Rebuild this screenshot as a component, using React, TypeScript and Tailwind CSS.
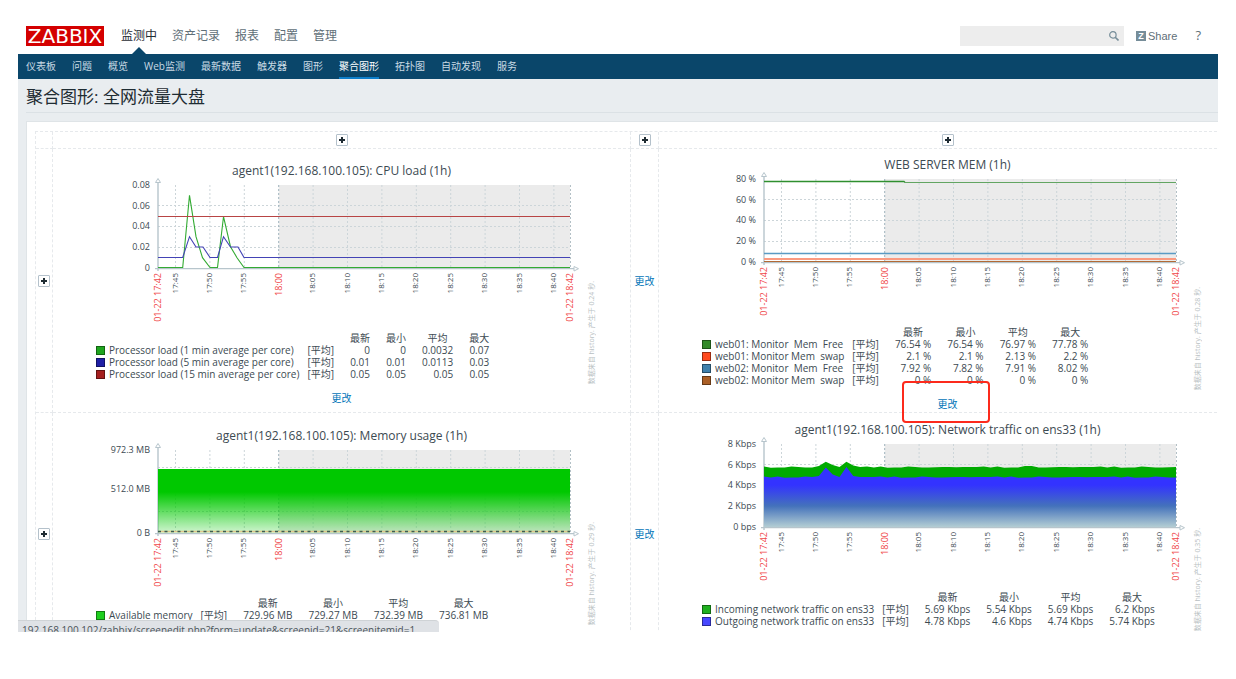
import React from "react";

const TICKS = ["17:45", "17:50", "17:55", "18:00", "18:05", "18:10", "18:15", "18:20", "18:25", "18:30", "18:35", "18:40"];

const LEFT = 106;
const RIGHT = 518;
const TOP = 7;
const BOTTOM = 90;
const HOUR_X = 226.7;

const tickX = (i: number) => LEFT + 17.5 + i * 34.4;

type Row = { color: string; name: string; values: string[] };

type ChartProps = {
  title: string;
  yLabels: { y: number; text: string }[];
  gridY: number[];
  rows: Row[];
  note: string;
  marked?: boolean;
  children: React.ReactNode;
};

function Chart({ title, yLabels, gridY, rows, note, marked, children }: ChartProps) {
  return (
    <div className="flex flex-col items-center justify-center border-r border-b border-dashed border-[#e6e9ec] pt-[5px]">
      <figure className="grid w-[577px] font-['Open_Sans','Noto_Sans_CJK_SC',sans-serif] text-[#3c4a52]">
        <div className="col-start-1 row-start-1 pb-1">
          <h2 className="pt-0.5 text-center text-[12px] leading-[15px]">{title}</h2>
          <svg viewBox="1 0 577 150" className="block h-[150px] w-full" role="img" aria-label={title}>
            <rect x={HOUR_X} y={TOP} width={RIGHT - HOUR_X} height={BOTTOM - TOP} fill="#ebebeb" />
            <g stroke="#ccd5d9" strokeWidth="1" strokeDasharray="2 2">
              {gridY.map((y) => (
                <line key={y} x1={LEFT} x2={RIGHT} y1={y} y2={y} />
              ))}
              {TICKS.map((t, i) => (
                <line key={t} x1={tickX(i)} x2={tickX(i)} y1={TOP} y2={BOTTOM} stroke={t === "18:00" ? "#9fb3bd" : "#ccd5d9"} />
              ))}
              <line x1={RIGHT + 0.5} x2={RIGHT + 0.5} y1={TOP} y2={BOTTOM} stroke="#b3c0c6" />
            </g>
            <g stroke="#b7c5cc" fill="none">
              <path d="M106 5V93" strokeWidth="1.4" />
              <path d="M103 90.700H522" strokeWidth="1.2" />
              <path d="M103.500 4.500L106 .5L108.500 4.500Z" fill="#fff" />
              <path d="M522 88.500L526.500 90.700L522 93Z" fill="#fff" />
            </g>
            {children}
            <g fontSize="9" fill="#3c4a52" textAnchor="end">
              {yLabels.map((l) => (
                <text key={l.text} x="98" y={l.y + 3}>
                  {l.text}
                </text>
              ))}
            </g>
            <g fontSize="8" fill="#3c4a52" textAnchor="end">
              {TICKS.map((t, i) =>
                t === "18:00" ? (
                  <text key={t} fontSize="9" fill="#f0474a" transform={`translate(${tickX(i) + 3} 95) rotate(-90)`}>
                    {t}
                  </text>
                ) : (
                  <text key={t} transform={`translate(${tickX(i) + 2} 95) rotate(-90)`}>
                    {t}
                  </text>
                ),
              )}
              <text fontSize="9" fill="#f0474a" transform="translate(109 95) rotate(-90)">01-22 17:42</text>
              <text fontSize="9" fill="#f0474a" transform="translate(521 95) rotate(-90)">01-22 18:42</text>
            </g>
          </svg>
          <table className="mt-1 ml-[43px] border-collapse text-[10px] leading-3 whitespace-nowrap">
            <thead>
              <tr className="h-3">
                <th colSpan={2} className="p-0" />
                {["最新", "最小", "平均", "最大"].map((h) => (
                  <th key={h} scope="col" className="h-3 p-0 pl-4 text-center font-normal">
                    {h}
                  </th>
                ))}
              </tr>
            </thead>
            <tbody>
              {rows.map((r) => (
                <tr key={r.name + r.color} className="h-3">
                  <th scope="row" className="p-0 text-left font-normal whitespace-pre">
                    <span className="flex h-3 items-center gap-1">
                      <span className="size-[9px] border border-black/40" style={{ backgroundColor: r.color }} />
                      {r.name}
                    </span>
                  </th>
                  <td className="p-0 pl-2">
                    <span className="block h-3">[平均]</span>
                  </td>
                  {r.values.map((v, i) => (
                    <td key={i} className="p-0 pl-4 text-right">
                      {v}
                    </td>
                  ))}
                </tr>
              ))}
            </tbody>
          </table>
        </div>
        <figcaption className="col-start-1 row-start-1 mr-8 rotate-180 self-end justify-self-end text-[7px] leading-3 whitespace-nowrap text-[#b9bfc3] [text-orientation:sideways] [writing-mode:vertical-rl]">
          {note}
        </figcaption>
      </figure>
      <span className="relative mt-[7px] flex">
        {marked && (
          <span className="pointer-events-none absolute -top-4 -right-8 -bottom-3 -left-9 rounded border-2 border-[#fc2a1c]" />
        )}
        <ChangeLink />
      </span>
    </div>
  );
}

function ChangeLink() {
  return (
    <a href="#edit" className="text-[10px] leading-[14px] text-[#0275b8]">
      更改
    </a>
  );
}

function PlusCell() {
  return (
    <div className="flex items-center justify-center border-r border-b border-dashed border-[#e6e9ec]">
      <button type="button" aria-label="添加" className="grid size-3 place-items-center rounded-[1px] border border-[#b4c1cb] bg-white">
        <svg viewBox="0 0 6 6" className="size-1.5">
          <path d="M3 0V6M0 3H6" stroke="#1f2c33" strokeWidth="2" />
        </svg>
      </button>
    </div>
  );
}

function LinkCell() {
  return (
    <div className="flex items-center justify-center border-r border-b border-dashed border-[#e6e9ec]">
      <ChangeLink />
    </div>
  );
}

const trafficX = Array.from({ length: 61 }, (_, i) => LEFT + (i * 412) / 60);
const wobble = [0, 1, 0.6, 0, 0.8, 1.2, 0.8, 0, 0.4, 0.6, 0.9, 0.6, 0.9, 0.9, 0.6, 1, 0.4];
const inPeaks: Record<number, number> = { 8: 29, 9: 24.7, 10: 28, 11: 30, 12: 24.7, 13: 28.5, 38: 29, 39: 29 };
const outPeaks: Record<number, number> = { 8: 39, 9: 30.5, 10: 37.5, 11: 40, 12: 30, 13: 39 };
const areaPath = (base: number, peaks: Record<number, number>, shift: number) =>
  `M${LEFT} ${BOTTOM}` +
  trafficX.map((x, i) => `L${x.toFixed(1)} ${peaks[i] ?? base + wobble[(i * 5 + shift) % wobble.length]}`).join("") +
  `L${RIGHT} ${BOTTOM}Z`;

export default function App() {
  const sub = ["仪表板", "问题", "概览", "Web监测", "最新数据", "触发器", "图形", "聚合图形", "拓扑图", "自动发现", "服务"];
  return (
    <div className="h-screen overflow-hidden bg-white px-[18px] pb-[47px] font-['Open_Sans','Noto_Sans_CJK_SC',sans-serif] text-[#1f2c33]">
      <div className="relative flex h-full flex-col overflow-hidden">
        <header className="flex h-[54px] shrink-0 items-end px-2">
          <a href="#home" className="mb-2 flex h-5 w-[78px] items-center justify-center bg-[#d40000] font-['DejaVu_Sans',sans-serif] text-[20px] leading-5 text-white">
            ZABBIX
          </a>
          <nav className="ml-[17px] flex h-[37px] gap-[15px] text-[12px] leading-[38px] text-[#5f6f78]">
            <a href="#monitoring" className="relative text-[#1f2c33]">
              监测中
              <svg viewBox="0 0 14 7" className="absolute bottom-0 left-1/2 h-[7px] w-[14px] -translate-x-1/2">
                <path d="M0 7L7 0L14 7Z" fill="#0a466a" />
              </svg>
            </a>
            <a href="#inventory">资产记录</a>
            <a href="#reports">报表</a>
            <a href="#configuration">配置</a>
            <a href="#administration">管理</a>
          </nav>
          <div className="mb-2 ml-auto flex h-5 items-center text-[11px] text-[#5f6f78]">
            <div className="flex h-5 w-[164px] items-center bg-[#ededed] pr-[5px]">
              <input aria-label="搜索" className="h-5 min-w-0 flex-1 bg-transparent px-1 outline-none" />
              <button type="button" aria-label="搜索">
                <svg viewBox="0 0 10 10" className="size-2.5" fill="none" stroke="#768d99">
                  <circle cx="3.900" cy="3.900" r="3.200" strokeWidth="1.200" />
                  <path d="M6.200 6.200L9.500 9.500" strokeWidth="1.600" />
                </svg>
              </button>
            </div>
            <a href="#share" className="ml-3 flex items-center gap-0.5 font-['Liberation_Sans',sans-serif]">
              <span className="grid h-2.5 w-2.5 place-items-center bg-[#768d99] text-[9px] leading-none font-bold text-white">Z</span>
              Share
            </a>
            <a href="#help" className="mr-[9px] ml-[18px] text-[13px]">
              ?
            </a>
          </div>
        </header>
        <nav className="flex h-[25px] shrink-0 gap-4 bg-[#0a466a] px-2 text-[10px] leading-[25px] text-[#c9dae4]">
          {sub.map((s) => (
            <a key={s} href={`#${s}`} className={s === "聚合图形" ? "h-[25px] border-b-2 border-[#0e7fcb] text-white" : "h-[25px]"}>
              {s}
            </a>
          ))}
        </nav>
        <main className="min-h-0 flex-1 overflow-hidden bg-[#e9edf0] pl-2">
          <h1 className="h-[34px] border-b border-[#dbe1e5] text-[17px] leading-[36px]">聚合图形: 全网流量大盘</h1>
          <section className="mt-2 overflow-hidden border-t border-l border-[#dfe4e7] bg-white pt-[9px] pl-2">
            <div className="grid w-[calc(100%+19px)] grid-cols-[17px_minmax(0,1fr)_28px_minmax(0,1fr)] grid-rows-[17px_264px_242px] border-t border-l border-dashed border-[#e6e9ec]">
              <div className="border-r border-b border-dashed border-[#e6e9ec]" />
              <PlusCell />
              <PlusCell />
              <PlusCell />

              <PlusCell />
              <Chart
                title="agent1(192.168.100.105): CPU load (1h)"
                yLabels={[
                  { y: 7, text: "0.08" },
                  { y: 28, text: "0.06" },
                  { y: 48, text: "0.04" },
                  { y: 69, text: "0.02" },
                  { y: 90, text: "0" },
                ]}
                gridY={[27.5, 48.5, 69.5]}
                rows={[
                  { color: "#1fa51f", name: "Processor load (1 min average per core)", values: ["0", "0", "0.0032", "0.07"] },
                  { color: "#1f1fa5", name: "Processor load (5 min average per core)", values: ["0.01", "0.01", "0.0113", "0.03"] },
                  { color: "#a51f1f", name: "Processor load (15 min average per core)", values: ["0.05", "0.05", "0.05", "0.05"] },
                ]}
                note="数据来自 history. 产生于 0.24 秒."
              >
                <g fill="none" strokeWidth="1.1">
                  <path stroke="#33ab33" d="M106 89.500H130.700L137.500 17.300L144 58.700L150.500 79.700L158 89.500H165.500L171.500 38.700L178.500 68.700L185 79.700L192 89.500H518" />
                  <path stroke="#4343b5" d="M106 79.500H130.700L137.500 58.700L144 69H151L158 79.500H165.500L171.500 58.700L178.500 69H186L192 79.500H518" />
                  <path stroke="#b84444" d="M106 38.500H518" />
                </g>
              </Chart>
              <LinkCell />
              <Chart
                title="WEB SERVER MEM (1h)"
                yLabels={[
                  { y: 7, text: "80 %" },
                  { y: 28, text: "60 %" },
                  { y: 48, text: "40 %" },
                  { y: 69, text: "20 %" },
                  { y: 90, text: "0 %" },
                ]}
                gridY={[27.5, 48.5, 69.5]}
                rows={[
                  { color: "#338a29", name: "web01: Monitor  Mem  Free", values: ["76.54 %", "76.54 %", "76.97 %", "77.78 %"] },
                  { color: "#ff4a1f", name: "web01: Monitor Mem  swap", values: ["2.1 %", "2.1 %", "2.13 %", "2.2 %"] },
                  { color: "#3f80ac", name: "web02: Monitor  Mem  Free", values: ["7.92 %", "7.82 %", "7.91 %", "8.02 %"] },
                  { color: "#ab5f26", name: "web02: Monitor Mem  swap", values: ["0 %", "0 %", "0 %", "0 %"] },
                ]}
                note="数据来自 history. 产生于 0.28 秒."
                marked
              >
                <g fill="none">
                  <path stroke="#2f8f2f" strokeWidth="1.300" d="M106 9.500H246L247 10.500" />
                  <path stroke="#62a562" d="M246 10.500H518" />
                  <path stroke="#5a9bc4" strokeWidth="1.300" d="M106 81.500H518" />
                  <path stroke="#fb9a80" strokeWidth="2" d="M106 87H518" />
                  <path stroke="#b26a35" strokeWidth="1.200" d="M106 89.500H518" />
                </g>
              </Chart>

              <PlusCell />
              <Chart
                title="agent1(192.168.100.105): Memory usage (1h)"
                yLabels={[
                  { y: 7, text: "972.3 MB" },
                  { y: 46, text: "512.0 MB" },
                  { y: 90, text: "0 B" },
                ]}
                gridY={[24.5, 46.5, 68.5]}
                rows={[{ color: "#1fcf1f", name: "Available memory", values: ["729.96 MB", "729.27 MB", "732.39 MB", "736.81 MB"] }]}
                note="数据来自 history. 产生于 0.29 秒."
              >
                <defs>
                  <linearGradient id="memory" x1="0" x2="0" y1="0" y2="1">
                    <stop offset="0" stopColor="#00c800" />
                    <stop offset="0.36" stopColor="#00c800" />
                    <stop offset="1" stopColor="#00c800" stopOpacity="0.18" />
                  </linearGradient>
                </defs>
                <rect x={LEFT} y="26" width="412" height="64" fill="url(#memory)" />
                <path d="M106 88.500H518" stroke="#e0c58c" strokeWidth="1.500" />
                <path d="M106 88.500H518" stroke="#3d5e52" strokeWidth="1.500" strokeDasharray="3 3.500" />
              </Chart>
              <LinkCell />
              <Chart
                title="agent1(192.168.100.105): Network traffic on ens33 (1h)"
                yLabels={[
                  { y: 7, text: "8 Kbps" },
                  { y: 28, text: "6 Kbps" },
                  { y: 48, text: "4 Kbps" },
                  { y: 69, text: "2 Kbps" },
                  { y: 90, text: "0 bps" },
                ]}
                gridY={[27.5, 48.5, 69.5]}
                rows={[
                  { color: "#1fb01f", name: "Incoming network traffic on ens33", values: ["5.69 Kbps", "5.54 Kbps", "5.69 Kbps", "6.2 Kbps"] },
                  { color: "#4747ff", name: "Outgoing network traffic on ens33", values: ["4.78 Kbps", "4.6 Kbps", "4.74 Kbps", "5.74 Kbps"] },
                ]}
                note="数据来自 history. 产生于 0.35 秒."
              >
                <defs>
                  <linearGradient id="traffic" gradientUnits="userSpaceOnUse" x1="0" x2="0" y1="48" y2="90">
                    <stop offset="0" stopColor="#3333ff" />
                    <stop offset="0.5" stopColor="#4472bb" />
                    <stop offset="1" stopColor="#b3cdd3" />
                  </linearGradient>
                </defs>
                <path d={areaPath(29.5, inPeaks, 0)} fill="#00aa00" />
                <path d={areaPath(39.5, outPeaks, 7)} fill="url(#traffic)" />
              </Chart>
            </div>
          </section>
        </main>
        <div className="absolute bottom-0 left-0 h-3 overflow-hidden rounded-tr border-t border-[#cfd3d6] bg-[#dfe2e6] pr-6 pl-1 text-[10px] leading-[18px] whitespace-nowrap text-[#4b545a]">
          192.168.100.102/zabbix/screenedit.php?form=update&amp;screenid=21&amp;screenitemid=1
        </div>
      </div>
    </div>
  );
}
